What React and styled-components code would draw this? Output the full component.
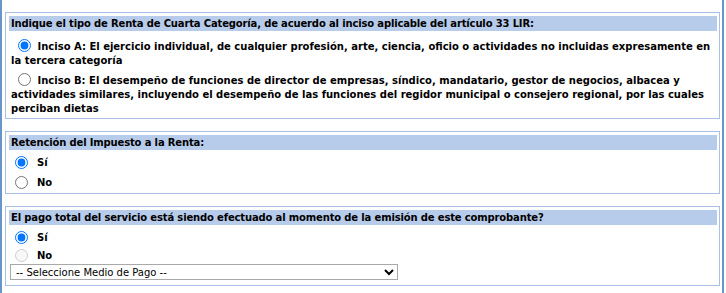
import React from "react";
import styled, { createGlobalStyle } from "styled-components";

const GlobalStyle = createGlobalStyle`
    html, body {
        margin: 0;
        padding: 0;
        background: #ffffff;
    }
`;

const App = () => {
    return (
        <>
            <GlobalStyle />
            <StyledFrame>
                <StyledSection $bottom={2}>
                    <StyledHeader>Indique el tipo de Renta de Cuarta Categoría, de acuerdo al inciso aplicable del artículo 33 LIR:</StyledHeader>
                    <StyledParagraph $top={8}>
                        <StyledRadio type="radio" name="inciso" defaultChecked $left={7} />
                        {" "}Inciso A: El ejercicio individual, de cualquier profesión, arte, ciencia, oficio o actividades no incluidas expresamente en la tercera categoría
                    </StyledParagraph>
                    <StyledParagraph $top={5}>
                        <StyledRadio type="radio" name="inciso" $left={7} />
                        {" "}Inciso B: El desempeño de funciones de director de empresas, síndico, mandatario, gestor de negocios, albacea y actividades similares, incluyendo el desempeño de las funciones del regidor municipal o consejero regional, por las cuales perciban dietas
                    </StyledParagraph>
                </StyledSection>

                <StyledSection $bottom={1}>
                    <StyledHeader>Retención del Impuesto a la Renta:</StyledHeader>
                    <StyledOptions>
                        <StyledOption $height={20}>
                            <StyledRadio type="radio" name="retencion" defaultChecked $left={6} />
                            <span>Sí</span>
                        </StyledOption>
                        <StyledOption $height={20}>
                            <StyledRadio type="radio" name="retencion" $left={6} />
                            <span>No</span>
                        </StyledOption>
                    </StyledOptions>
                </StyledSection>

                <StyledSection $bottom={5}>
                    <StyledHeader>El pago total del servicio está siendo efectuado al momento de la emisión de este comprobante?</StyledHeader>
                    <StyledOptions>
                        <StyledOption $height={20}>
                            <StyledRadio type="radio" name="pago" defaultChecked $left={6} />
                            <span>Sí</span>
                        </StyledOption>
                        <StyledOption $height={17}>
                            <StyledRadio type="radio" name="pago" disabled $left={6} />
                            <span>No</span>
                        </StyledOption>
                    </StyledOptions>
                    <StyledSelect defaultValue="">
                        <option value="">-- Seleccione Medio de Pago --</option>
                    </StyledSelect>
                </StyledSection>
            </StyledFrame>
        </>
    );
};

export default App;

const StyledFrame = styled.div`
    box-sizing: border-box;
    width: 724px;
    height: 293px;
    padding: 12px 2px 0px 3px;
    border-left: 2px solid #6a95c8;
    border-right: 2px solid #6a95c8;
    display: flex;
    flex-direction: column;
    gap: 12px;
    font-family: "DejaVu Sans", Verdana, sans-serif;
    color: #000000;
`;

const StyledSection = styled.div`
    border: 1px solid #a9c1e4;
    padding: 3px 2px ${props => props.$bottom}px 3px;
    display: flex;
    flex-direction: column;
`;

const StyledHeader = styled.div`
    background-color: #b7cbea;
    height: 15px;
    line-height: 15px;
    padding-left: 2px;
    font-size: 10px;
    font-weight: bold;
    letter-spacing: -0.15px;
    white-space: nowrap;
`;

const StyledParagraph = styled.div`
    margin-top: ${props => props.$top}px;
    padding-left: 2px;
    font-size: 10px;
    font-weight: bold;
    line-height: 14px;
`;

const StyledOptions = styled.div`
    display: flex;
    flex-direction: column;
    padding-top: 2px;
`;

const StyledOption = styled.label`
    display: flex;
    align-items: center;
    gap: 6px;
    height: ${props => props.$height}px;
    font-size: 10px;
    font-weight: bold;
`;

const StyledRadio = styled.input`
    width: 13px;
    height: 13px;
    margin: 0px 3px 0px ${props => props.$left}px;
    vertical-align: -2px;
`;

const StyledSelect = styled.select`
    width: 388px;
    height: 16px;
    margin: 0px 0px 0px 1px;
    padding: 0px 0px 0px 1px;
    border: 1px solid #a9a9a9;
    border-radius: 0px;
    background: #ffffff;
    font-family: "DejaVu Sans", Verdana, sans-serif;
    font-size: 10px;
    color: #000000;
`;
